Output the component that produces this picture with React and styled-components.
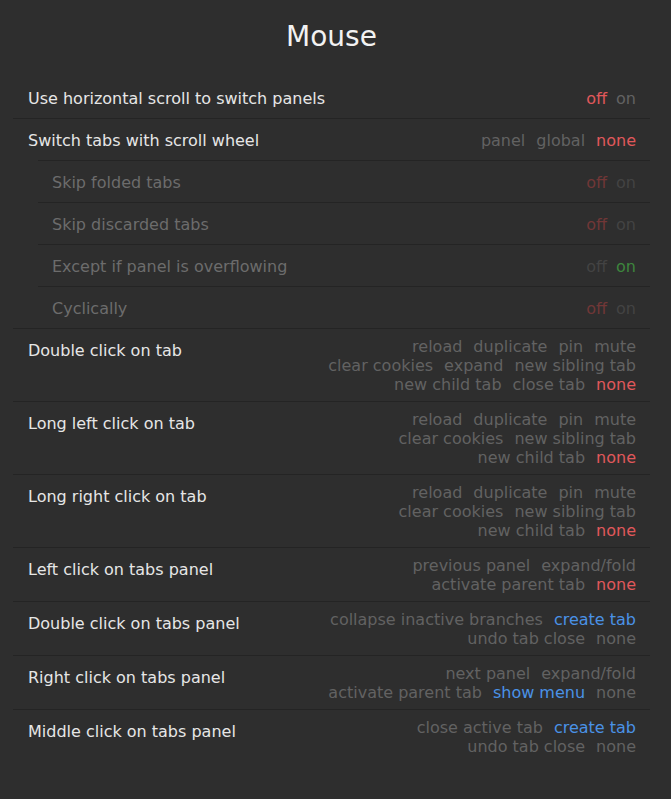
import React from "react";
import styled, { createGlobalStyle } from "styled-components";

const GlobalStyle = createGlobalStyle`
  html, body {
    margin: 0;
    padding: 0;
    background-color: #2e2e2e;
  }
  body {
    font-family: "DejaVu Sans", "Liberation Sans", sans-serif;
    min-height: 799px;
  }
`;

const Page = styled.section`
  width: 637px;
  margin-left: 13px;
  padding-bottom: 36px;
`;

const Title = styled.h1`
  margin: 0;
  padding-top: 20px;
  height: 77px;
  box-sizing: border-box;
  font-size: 28px;
  line-height: 34px;
  font-weight: normal;
  color: #f2f2f2;
  text-align: center;
`;

const Row = styled.div`
  display: flex;
  justify-content: space-between;
  align-items: flex-start;
  padding: 8px 14px 7px 15px;
  margin-left: ${(p) => (p.$sub ? "25px" : "0")};
  padding-left: ${(p) => (p.$sub ? "14px" : "15px")};
  border-top: ${(p) => (p.$sub ? "1px solid #242424" : "none")};
  border-bottom: ${(p) => (p.$last ? "none" : p.$sub || p.$open ? "none" : "1px solid #242424")};
`;

const Group = styled.div`
  border-bottom: 1px solid #242424;
`;

const Label = styled.div`
  font-size: 16px;
  line-height: 24px;
  padding-top: 2px;
  color: ${(p) => (p.$off ? "#6c6c6c" : "#e6e6e6")};
  white-space: nowrap;
`;

const Options = styled.div`
  display: flex;
  flex-wrap: wrap;
  justify-content: flex-end;
  column-gap: ${(p) => (p.$toggle ? "9px" : "11px")};
  max-width: 316px;
  padding-top: ${(p) => (p.$single ? "4px" : "0")};
`;

const colors = {
  dim: "#626262",
  red: "#e0585b",
  blue: "#4a92e6",
  green: "#3f8f3f",
  offDim: "#434343",
  offRed: "#713737",
  offGreen: "#3d853d",
};

const Opt = styled.span`
  font-size: 16px;
  line-height: 19px;
  white-space: nowrap;
  color: ${(p) => colors[p.$c || "dim"]};
`;

function Toggle({ on, disabled }) {
  const pre = disabled ? "off" : "";
  const cap = (c) => (disabled ? pre + c[0].toUpperCase() + c.slice(1) : c);
  return (
    <Options $toggle $single>
      <Opt $c={on ? cap("dim") : cap("red")}>off</Opt>
      <Opt $c={on ? cap("green") : cap("dim")}>on</Opt>
    </Options>
  );
}

const actions = [
  {
    label: "Double click on tab",
    opts: ["reload", "duplicate", "pin", "mute", "clear cookies", "expand", "new sibling tab", "new child tab", "close tab", ["none", "red"]],
  },
  {
    label: "Long left click on tab",
    opts: ["reload", "duplicate", "pin", "mute", "clear cookies", "new sibling tab", "new child tab", ["none", "red"]],
  },
  {
    label: "Long right click on tab",
    opts: ["reload", "duplicate", "pin", "mute", "clear cookies", "new sibling tab", "new child tab", ["none", "red"]],
  },
  {
    label: "Left click on tabs panel",
    opts: ["previous panel", "expand/fold", "activate parent tab", ["none", "red"]],
  },
  {
    label: "Double click on tabs panel",
    opts: ["collapse inactive branches", ["create tab", "blue"], "undo tab close", "none"],
  },
  {
    label: "Right click on tabs panel",
    opts: ["next panel", "expand/fold", "activate parent tab", ["show menu", "blue"], "none"],
  },
  {
    label: "Middle click on tabs panel",
    opts: ["close active tab", ["create tab", "blue"], "undo tab close", "none"],
  },
];

const subs = [
  { label: "Skip folded tabs", on: false },
  { label: "Skip discarded tabs", on: false },
  { label: "Except if panel is overflowing", on: true },
  { label: "Cyclically", on: false },
];

export default function App() {
  return (
    <>
      <GlobalStyle />
      <Page>
        <Title>Mouse</Title>
        <Row>
          <Label>Use horizontal scroll to switch panels</Label>
          <Toggle on={false} />
        </Row>
        <Group>
          <Row $open>
            <Label>Switch tabs with scroll wheel</Label>
            <Options $single>
              <Opt>panel</Opt>
              <Opt>global</Opt>
              <Opt $c="red">none</Opt>
            </Options>
          </Row>
          {subs.map((s) => (
            <Row $sub key={s.label}>
              <Label $off>{s.label}</Label>
              <Toggle on={s.on} disabled />
            </Row>
          ))}
        </Group>
        {actions.map((a, i) => (
          <Row key={a.label} $last={i === actions.length - 1}>
            <Label>{a.label}</Label>
            <Options $single={a.opts.length < 3}>
              {a.opts.map((o) =>
                Array.isArray(o) ? (
                  <Opt key={o[0]} $c={o[1]}>{o[0]}</Opt>
                ) : (
                  <Opt key={o}>{o}</Opt>
                )
              )}
            </Options>
          </Row>
        ))}
      </Page>
    </>
  );
}
